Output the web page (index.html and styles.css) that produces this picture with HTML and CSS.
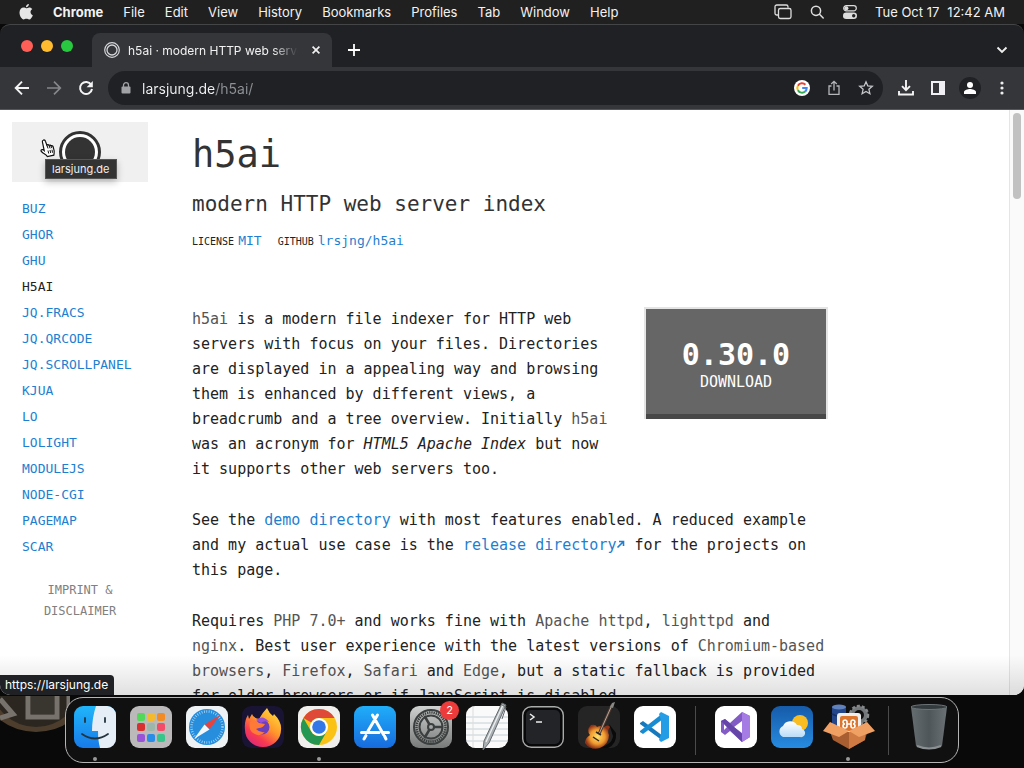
FILE: index.html
```html
<!DOCTYPE html>
<html lang="en">
<head>
  <meta charset="UTF-8">
  <title>h5ai · modern HTTP web server index</title>
  <link rel="stylesheet" href="styles.css">
</head>
<body>
  <header class="menubar">
    <svg class="apple" viewBox="0 0 16 18" width="16" height="18"><path fill="#e6e6e6" d="M10.9 1c.1 1.700-1.300 3.300-2.900 3.300C7.800 2.600 9.300 1.100 10.900 1zM8.300 5.200c.8 0 1.700-.8 3-.8 1.200 0 2.300.6 3 1.600-2.600 1.600-2.200 5.100.5 6.200-.6 1.900-2.100 4.300-3.600 4.300-1.100 0-1.500-.7-2.800-.7s-1.800.7-2.800.7C3.700 16.500 1.500 13 1.500 9.600c0-3.200 2-5.100 4.100-5.100 1.200 0 2 .7 2.700.7z"/></svg>
    <nav class="menus">
      <button class="app-name">Chrome</button>
      <button>File</button>
      <button>Edit</button>
      <button>View</button>
      <button>History</button>
      <button>Bookmarks</button>
      <button>Profiles</button>
      <button>Tab</button>
      <button>Window</button>
      <button>Help</button>
    </nav>
    <div class="status">
      <svg viewBox="0 0 18 16" width="18" height="16" fill="none" stroke="#ddd" stroke-width="1.300"><path d="M4 11H2.800A1.800 1.800 0 0 1 1 9.200v-6.400a1.800 1.800 0 0 1 1.800-1.800h9.400A1.800 1.800 0 0 1 14 2.800v1"/><rect x="4.500" y="4.500" width="12.500" height="10" rx="1.800"/></svg>
      <svg viewBox="0 0 16 16" width="16" height="16" fill="none" stroke="#ddd" stroke-width="1.500" stroke-linecap="round"><circle cx="7" cy="6.800" r="4.600"/><path d="M10.500 10.300l3.700 3.700"/></svg>
      <svg viewBox="0 0 16 16" width="16" height="16"><rect x="1.700" y="1.700" width="12.600" height="5.200" rx="2.600" fill="none" stroke="#ddd" stroke-width="1.200"/><circle cx="4.400" cy="4.300" r="2" fill="#ddd"/><rect x="1" y="8.500" width="14" height="6.500" rx="3.200" fill="#ddd"/><circle cx="11.700" cy="11.700" r="1.700" fill="#222"/></svg>
      <span class="clock"><span>Tue Oct 17</span><span>12:42 AM</span></span>
    </div>
  </header>

  <div class="window">
    <div class="tabstrip">
      <div class="lights">
        <button class="light red" aria-label="Close"></button>
        <button class="light yellow" aria-label="Minimize"></button>
        <button class="light green" aria-label="Zoom"></button>
      </div>
      <div class="tab">
        <svg viewBox="0 0 16 16" width="16" height="16" fill="none" stroke="#d6d7d9"><circle cx="8" cy="8" r="7.300" stroke-width="1.200"/><circle cx="8" cy="8" r="5" stroke-width="1.300"/></svg>
        <span class="tab-title">h5ai · modern HTTP web server</span>
        <button aria-label="Close tab"><svg viewBox="0 0 8 8" width="8" height="8" stroke="#f1f1f1" stroke-width="1.700"><path d="M.6.6l6.800 6.800M7.400.6L.6 7.400"/></svg></button>
      </div>
      <button class="new-tab" aria-label="New tab"><svg viewBox="0 0 12 12" width="12" height="12" stroke="#fff" stroke-width="1.800"><path d="M6 0v12M0 6h12"/></svg></button>
      <button class="tab-search" aria-label="Search tabs"><svg viewBox="0 0 12 8" width="12" height="8" fill="none" stroke="#eee" stroke-width="1.900"><path d="M1.500 1.500L6 6l4.500-4.500"/></svg></button>
    </div>

    <div class="toolbar">
      <div class="history">
        <button aria-label="Back"><svg viewBox="0 0 16 16" width="16" height="16" fill="none" stroke="#f4f4f4" stroke-width="1.900"><path d="M15 8H2M8 1.700L1.700 8 8 14.300"/></svg></button>
        <button aria-label="Forward"><svg viewBox="0 0 16 16" width="16" height="16" fill="none" stroke="#85878a" stroke-width="1.700"><path d="M1 8h13M8 1.700L14.300 8 8 14.300"/></svg></button>
        <button aria-label="Reload"><svg viewBox="0 0 16 16" width="16" height="16"><path d="M13.200 4.800A6 6 0 1 0 14 9" fill="none" stroke="#f4f4f4" stroke-width="2"/><path d="M14.800 1v6.200H8.600z" fill="#f4f4f4"/></svg></button>
      </div>
      <div class="address">
        <svg viewBox="0 0 10 12" width="10" height="12"><rect x=".5" y="4.500" width="9" height="7" rx="1" fill="#a0a2a5"/><path d="M2.500 5V3.200a2.500 2.500 0 0 1 5 0V5" fill="none" stroke="#a0a2a5" stroke-width="1.300"/></svg>
        <input type="text" class="url" value="larsjung.de/h5ai/" aria-label="Address">
        <div class="address-icons">
          <button aria-label="Google"><svg viewBox="0 0 16 16" width="16" height="16" fill="none" stroke-width="2"><circle cx="8" cy="8" r="8" fill="#fff"/><path stroke="#ea4335" d="M3.900 5.700A4.700 4.700 0 0 1 11.400 4.700"/><path stroke="#fbbc05" d="M3.900 5.700a4.700 4.700 0 0 0 0 4.600"/><path stroke="#34a853" d="M3.900 10.300a4.700 4.700 0 0 0 7.200 1.200"/><path stroke="#4285f4" d="M11.100 11.500A4.700 4.700 0 0 0 12.700 8.100H8.200"/></svg></button>
          <button aria-label="Share"><svg viewBox="0 0 16 16" width="16" height="16" fill="none" stroke="#b4b6b9" stroke-width="1.300"><path d="M5.500 6h-2.500v8.300h10V6h-2.500M8 10.500V1.500M5.200 4L8 1.300 10.800 4"/></svg></button>
          <button aria-label="Bookmark"><svg viewBox="0 0 16 16" width="16" height="16" fill="none" stroke="#c5c7ca" stroke-width="1.300"><path d="M8 1.800l1.800 4.100 4.500.4-3.400 3 1 4.400L8 11.400l-3.900 2.300 1-4.400-3.400-3 4.500-.4z"/></svg></button>
        </div>
      </div>
      <div class="actions">
        <button aria-label="Downloads"><svg viewBox="0 0 16 16" width="16" height="16" fill="none" stroke="#f4f4f4" stroke-width="1.900"><path d="M8 0v10M4 6.200l4 4 4-4M1 11v3.500h14V11"/></svg></button>
        <button aria-label="Side panel"><svg viewBox="0 0 16 16" width="16" height="16"><path fill="#f0f0f4" fill-rule="evenodd" d="M1 1h14v14H1zM3 3v10h6V3z"/></svg></button>
        <button class="profile" aria-label="Profile"><svg viewBox="0 0 16 16" width="16" height="16" fill="#fff"><circle cx="8" cy="5" r="3"/><path d="M2 14v-2c0-2 4-3 6-3s6 1 6 3v2z"/></svg></button>
        <button aria-label="More"><svg viewBox="0 0 16 16" width="16" height="16" fill="#eee"><circle cx="8" cy="3" r="1.600"/><circle cx="8" cy="8" r="1.600"/><circle cx="8" cy="13" r="1.600"/></svg></button>
      </div>
    </div>

    <div class="viewport">
      <aside class="sidebar">
        <a href="#" class="logo" aria-label="larsjung.de">
          <svg viewBox="0 0 42 42" width="42" height="42"><circle cx="21" cy="21" r="19.500" fill="#fff" stroke="#333" stroke-width="3"/><circle cx="21" cy="21" r="15" fill="#333"/></svg>
        </a>
        <nav class="projects">
          <a href="#">BUZ</a>
          <a href="#">GHOR</a>
          <a href="#">GHU</a>
          <a href="#" class="active">H5AI</a>
          <a href="#">JQ.FRACS</a>
          <a href="#">JQ.QRCODE</a>
          <a href="#">JQ.SCROLLPANEL</a>
          <a href="#">KJUA</a>
          <a href="#">LO</a>
          <a href="#">LOLIGHT</a>
          <a href="#">MODULEJS</a>
          <a href="#">NODE-CGI</a>
          <a href="#">PAGEMAP</a>
          <a href="#">SCAR</a>
        </nav>
        <a href="#" class="imprint">IMPRINT &amp;<br>DISCLAIMER</a>
      </aside>

      <main class="content">
        <h1>h5ai</h1>
        <h2>modern HTTP web server index</h2>
        <div class="infos">
          <span>LICENSE <a href="#">MIT</a></span>
          <span>GITHUB <a href="#">lrsjng/h5ai</a></span>
        </div>
        <a href="#" class="download">
          <strong>0.30.0</strong>
          <span>DOWNLOAD</span>
        </a>
        <p><b>h5ai</b> is a modern file indexer for HTTP web servers with focus on your files. Directories are displayed in a appealing way and browsing them is enhanced by different views, a breadcrumb and a tree overview. Initially <b>h5ai</b> was an acronym for <em>HTML5 Apache Index</em> but now it supports other web servers too.</p>
        <p>See the <a href="#">demo directory</a> with most features enabled. A reduced example and my actual use case is the <a href="#">release directory<svg class="external" viewBox="0 0 9 9" width="9" height="9"><path d="M1.500 7.500L7 2M3 1.500h4.500V6" fill="none" stroke="#1e7fd0" stroke-width="1.600"/></svg></a> for the projects on this page.</p>
        <p>Requires <b>PHP 7.0+</b> and works fine with <b>Apache httpd</b>, <b>lighttpd</b> and <b>nginx</b>. Best user experience with the latest versions of <b>Chromium-based browsers</b>, <b>Firefox</b>, <b>Safari</b> and <b>Edge</b>, but a static fallback is provided for older browsers or if JavaScript is disabled.</p>
      </main>

      <div class="scrollbar"><div class="thumb"></div></div>
      <div class="tooltip">larsjung.de</div>
      <svg class="pointer" viewBox="0 0 16 18" width="16" height="18"><path d="M3.200 1.200c1-.6 1.900.1 2.200 1l1.500 4c.5-.7 1.600-.7 2.100.2.700-.5 1.600-.3 2 .5 1-.5 1.900.1 2.200 1 .7 2.200 1.400 4.400.9 6.800l-.3 1.500-6.500 1.300c-.9-1.700-2.800-2.500-4.300-3.600-1.600-1-2.500-2-1.800-2.900.8-.9 2.100-.2 3 .6L2.400 3c-.2-.8.1-1.500.8-1.800z" fill="#fff" stroke="#111" stroke-width="1.200"/><path d="M7 6.300l1 3.200M9.200 6.800l.9 2.600M11.200 7.200l.7 2M8 11.500l.7 3M10 11l.7 3M12 10.700l.5 3" fill="none" stroke="#111"/></svg>
      <div class="link-status">https://larsjung.de</div>
    </div>
  </div>

  <footer class="desktop">
    <svg class="wallpaper" viewBox="0 0 70 42" width="70" height="42"><ellipse cx="36" cy="-2" rx="49" ry="38" fill="#4d3d2d"/><ellipse cx="36" cy="-8" rx="43" ry="39" fill="#2b2620"/><path d="M0 22L13 18 0 3M28 0v21h29V0M69 0v12" fill="none" stroke="#77726b" stroke-width="5"/><path d="M31 0v18h23V0" fill="#393630"/></svg>
    <nav class="dock">
      <button class="app running" aria-label="Finder">
        <svg viewBox="0 0 42 42"><defs><linearGradient id="finder" x2="0" y2="1"><stop stop-color="#20b5fa"/><stop offset="1" stop-color="#187be9"/></linearGradient></defs><rect width="42" height="42" rx="9" fill="url(#finder)"/><path d="M22 0h11a9 9 0 0 1 9 9v24a9 9 0 0 1-9 9h-7q-2-7-2-17h-6Q18 12 22 0z" fill="#e5edf6"/><path d="M11 12v4M31 12v4M8 28q13 9 26 0" fill="none" stroke="#23343f" stroke-width="1.800" stroke-linecap="round"/></svg>
      </button>
      <button class="app" aria-label="Launchpad">
        <svg viewBox="0 0 42 42"><rect width="42" height="42" rx="9" fill="#bcb9bb"/><rect x="7" y="7" width="8" height="8" rx="2" fill="#53d85a"/><rect x="17" y="7" width="8" height="8" rx="2" fill="#f5ba2b"/><rect x="27" y="7" width="8" height="8" rx="2" fill="#f28b24"/><rect x="7" y="17" width="8" height="8" rx="2" fill="#d82f30"/><rect x="17" y="17" width="8" height="8" rx="2" fill="#9db6ac"/><rect x="27" y="17" width="8" height="8" rx="2" fill="#f34c68"/><rect x="7" y="28" width="8" height="8" rx="2" fill="#9953d6"/><rect x="17" y="28" width="8" height="8" rx="2" fill="#278de7"/><rect x="27" y="28" width="8" height="8" rx="2" fill="#38c58c"/></svg>
      </button>
      <button class="app" aria-label="Safari">
        <svg viewBox="0 0 42 42"><rect width="42" height="42" rx="9" fill="#eef2f5"/><circle cx="21" cy="21" r="18" fill="#278edd"/><circle cx="21" cy="21" r="15.500" fill="none" stroke="#b9ddf5" stroke-width="2.500" stroke-dasharray=".7 1.700"/><path d="M34 9L18.500 18.500l5 5z" fill="#e7433e"/><path d="M8 33l10.500-14.500 5 5z" fill="#f4f7fa"/></svg>
      </button>
      <button class="app" aria-label="Firefox">
        <svg viewBox="0 0 42 42"><defs><linearGradient id="fox" x1=".9" y1="0" x2=".2" y2="1"><stop stop-color="#ffe43c"/><stop offset=".45" stop-color="#ff982b"/><stop offset=".75" stop-color="#f83a51"/><stop offset="1" stop-color="#db257e"/></linearGradient></defs><rect width="42" height="42" rx="9" fill="#191334"/><path d="M25 2q2 5 6 8l1-2q8 8 7 16A18 17 0 0 1 3 24Q2 15 6 9l1 4 3-5q1 4 7 5 4-7 8-11z" fill="url(#fox)"/><circle cx="20" cy="21" r="7.500" fill="#6c40bc"/><path d="M8 16q5-4 9 1l6 1q-2 4-6 4l-3 1q4 4 9 3-5 5-10 2-7-3-5-12z" fill="#ff7937"/><path d="M14 14q7-6 13 2-5-2-8 1z" fill="#9851d5"/></svg>
      </button>
      <button class="app running" aria-label="Chrome">
        <svg viewBox="0 0 42 42"><rect width="42" height="42" rx="9" fill="#f1efed"/><circle cx="21" cy="21" r="18" fill="#fbc216"/><path d="M5.400 12A18 18 0 0 1 36.600 12H21a9 9 0 0 0-7.800 4.500z" fill="#df4937"/><path d="M5.400 12A18 18 0 0 0 21 39l7.800-13.500A9 9 0 0 1 13.200 25.500z" fill="#269653"/><circle cx="21" cy="21" r="9" fill="#fff"/><circle cx="21" cy="21" r="6.800" fill="#3478e7"/></svg>
      </button>
      <button class="app" aria-label="App Store">
        <svg viewBox="0 0 42 42"><defs><linearGradient id="store" x2="0" y2="1"><stop stop-color="#20aefa"/><stop offset="1" stop-color="#176bdd"/></linearGradient></defs><rect width="42" height="42" rx="9" fill="url(#store)"/><path d="M18.500 9L29.500 28.500M23.500 9L14 25M7.500 26.500H25M30 26.500h4.500M12 29.500l-2 3.500M30.500 30l1.500 3" stroke="#fff" stroke-width="3" stroke-linecap="round"/></svg>
      </button>
      <button class="app" aria-label="System Settings">
        <svg viewBox="0 0 42 42"><defs><linearGradient id="steel" x2="0" y2="1"><stop stop-color="#d0d2d1"/><stop offset="1" stop-color="#777a79"/></linearGradient></defs><rect width="42" height="42" rx="9" fill="url(#steel)"/><g fill="none" stroke="#3c3f3f"><circle cx="21" cy="21" r="17" stroke-width="2"/><circle cx="21" cy="21" r="14.500" stroke-width="2.500" stroke-dasharray="1.400 .8"/><circle cx="21" cy="21" r="11.500" stroke-width="2"/><circle cx="21" cy="21" r="3" stroke-width="2"/><path d="M24 21H33M19.500 18.500l-5-8.500M19.500 23.500l-5 8.500" stroke-width="2.500"/></g></svg>
        <span class="badge">2</span>
      </button>
      <button class="app" aria-label="TextEdit">
        <svg viewBox="0 0 42 42"><rect width="42" height="42" rx="9" fill="#fafafa"/><path d="M0 11h42M0 17h42M0 23h42M0 29h42M0 35h42" stroke="#b9c4ca" stroke-width=".8"/><path d="M7 0v42" stroke="#dcdcdc"/><path d="M36-3l4 2-17 38-6 7 1-9z" fill="#aab0b3" stroke="#63696c"/><path d="M37-1L20 36" stroke="#eef1f2" stroke-width="1.300"/><path d="M36-1l4 2-4 12" fill="none" stroke="#64696c"/></svg>
      </button>
      <button class="app" aria-label="Terminal">
        <svg viewBox="0 0 42 42"><rect x=".7" y=".7" width="40.600" height="40.600" rx="8.500" fill="#080808" stroke="#a9aaaa" stroke-width="1.400"/><rect x="4" y="4" width="34" height="34" rx="5" fill="#222427"/><path d="M8 8l4 3-4 3M14 16h6" fill="none" stroke="#eee" stroke-width="1.500"/></svg>
      </button>
      <button class="app" aria-label="GarageBand">
        <svg viewBox="0 0 42 42"><defs><radialGradient id="burst"><stop stop-color="#ffe06a"/><stop offset=".6" stop-color="#f09a30"/><stop offset="1" stop-color="#8f3318"/></radialGradient></defs><rect width="42" height="42" rx="9" fill="#252526"/><path d="M17 42q17-2 18-12l-4-12 7 9q1 11-8 15z" fill="#0a0a0a"/><path d="M13 19q5-1 6 2 3-2 7 0 4-3 6 0-3 3-1 8 0 9-9 13-9 3-15-5 0-5 5-8-4-5 1-10z" fill="url(#burst)"/><path d="M21 28L34-1" stroke="#503a31" stroke-width="3"/><path d="M21 28L34-1" stroke="#b5a798"/><path d="M32 1l2-4 3-1-2 6" fill="#8b8985"/><path d="M15 31l6 4M18 26l5 3" stroke="#312821" stroke-width="1.500"/></svg>
      </button>
      <button class="app" aria-label="Visual Studio Code">
        <svg viewBox="0 0 42 42"><rect width="42" height="42" rx="9" fill="#fff"/><path d="M6 17l3-2 20 15v5L6 18z" fill="#1779bd"/><path d="M6 26l3 2 20-15V7L6 25z" fill="#198bd1"/><path d="M27 6l8 4v22l-8 4-2-2 2-6V14l-2-6z" fill="#249de6"/></svg>
      </button>
      <span class="divider"></span>
      <button class="app" aria-label="Visual Studio">
        <svg viewBox="0 0 42 42"><rect width="42" height="42" rx="9" fill="#fff"/><path fill-rule="evenodd" d="M6 15l4-2 5 4L27 6l8 4v21l-8 5-12-11-5 4-4-3zM9 18v6l3-3zM27 15l-8 6 8 6z" fill="#825bc5"/><path d="M27 6l8 4v21l-8 5z" fill="#a47ce3"/><path d="M6 15l4-2 17 15v8L9 18z" fill="#6545a8"/></svg>
      </button>
      <button class="app" aria-label="Weather">
        <svg viewBox="0 0 42 42"><defs><linearGradient id="sky" x2="0" y2="1"><stop stop-color="#165ba9"/><stop offset="1" stop-color="#278be0"/></linearGradient><linearGradient id="cloud" x2="0" y2="1"><stop stop-color="#fff"/><stop offset="1" stop-color="#b9dcf7"/></linearGradient></defs><rect width="42" height="42" rx="9" fill="url(#sky)"/><circle cx="29" cy="17" r="8" fill="#f9bd22"/><path d="M12 31a6 6 0 0 1 0-11 8 8 0 0 1 14-1q5 0 5 4a4 4 0 0 1-2 8z" fill="url(#cloud)"/></svg>
      </button>
      <button class="app running" aria-label="XAMPP">
        <svg viewBox="0 0 42 42"><circle cx="32" cy="9" r="7" fill="none" stroke="#74777a" stroke-width="4"/><circle cx="32" cy="9" r="9" fill="none" stroke="#85898b" stroke-width="2.500" stroke-dasharray="3 2"/><path d="M5 1v18h14V1z" fill="#244588"/><ellipse cx="12" cy="1" rx="7" ry="2.500" fill="#5f82bf"/><path d="M5 8q7 4 14 0" fill="none" stroke="#172f62" stroke-width="2"/><rect x="10" y="7" width="24" height="19" rx="3" fill="#eee"/><rect x="13" y="10" width="18" height="15" rx="2" fill="#dc752e"/><path d="M20 18h4M20 18v-1.500a2 2 0 1 0-2 1.500 2 2 0 1 0 2 2zM24 18v-1.500a2 2 0 1 1 2 1.500 2 2 0 1 1-2 2z" fill="none" stroke="#fff" stroke-width="1.600"/><path d="M2 23l20 3 19-3-3 11-16 9-16-9z" fill="#a95e32"/><path d="M22 26v17l16-9V23z" fill="#cf7a43"/><path d="M3 16l-7 9 16 6 10-6zM40 16l8 9-16 6-10-6z" fill="#f1a064"/></svg>
      </button>
      <span class="divider"></span>
      <button class="app" aria-label="Trash">
        <svg viewBox="0 0 42 42"><defs><linearGradient id="bin"><stop stop-color="#666d71"/><stop offset=".5" stop-color="#4f565a"/><stop offset="1" stop-color="#6b7174"/></linearGradient></defs><path d="M3 1h36l-5 39q-13 6-26 0z" fill="url(#bin)"/><ellipse cx="21" cy="1" rx="18" ry="2.500" fill="#343b3e" stroke="#6d7579"/><path d="M9 40q12 5 24 0" fill="none" stroke="#8b9193" stroke-width="2"/></svg>
      </button>
    </nav>
  </footer>
</body>
</html>
```
FILE: styles.css
```css
* {
  box-sizing: border-box;
}

html, body {
  margin: 0;
  height: 100%;
}

body {
  display: flex;
  flex-direction: column;
  overflow: hidden;
  background: #090909;
  color: #f2f2f2;
  font-family: Inter, "Liberation Sans", sans-serif;
  font-size: 13px;
}

a {
  color: #1e7fd0;
  text-decoration: none;
}

button {
  display: flex;
  align-items: center;
  justify-content: center;
  padding: 0;
  border: 0;
  background: none;
  color: inherit;
  font: inherit;
}

svg {
  display: block;
  flex: none;
  overflow: visible;
}

/* system menu bar */
.menubar {
  display: flex;
  align-items: center;
  height: 24px;
  padding: 0 19px 0 18px;
  background: #202020;
}

.menus {
  display: flex;
  gap: 20px;
  margin-left: 19px;
}

.app-name {
  font-weight: 700;
}

.status {
  display: flex;
  align-items: center;
  gap: 17px;
  margin-left: auto;
}

.clock {
  display: flex;
  gap: 8px;
}

/* browser window */
.window {
  display: flex;
  flex: 1;
  flex-direction: column;
  min-height: 0;
  overflow: hidden;
  border-top: 1px solid #444547;
  border-radius: 10px;
  background: #202124;
}

.tabstrip {
  display: flex;
  align-items: flex-end;
  height: 42px;
  padding-right: 16px;
}

.lights {
  display: flex;
  gap: 8px;
  width: 92px;
  padding-left: 21px;
  margin-bottom: 15px;
}

.light {
  width: 12px;
  height: 12px;
  border-radius: 50%;
}

.red {
  background: #ff5f57;
}

.yellow {
  background: #febc2e;
}

.green {
  background: #28c840;
}

.tab {
  display: flex;
  align-items: center;
  gap: 8px;
  width: 240px;
  height: 34px;
  padding: 0 12px;
  border-radius: 8px 8px 0 0;
  background: #35363a;
  font-size: 12px;
}

.tab-title {
  flex: 1;
  overflow: hidden;
  margin-right: 6px;
  white-space: nowrap;
  mask-image: linear-gradient(to right, #000 85%, transparent);
}

.new-tab {
  height: 34px;
  margin-left: 16px;
}

.tab-search {
  height: 34px;
  margin-left: auto;
}

.toolbar {
  display: flex;
  align-items: center;
  height: 43px;
  padding: 0 14px;
  border-bottom: 1px solid #55565a;
  background: #35363a;
}

.history,
.actions,
.address-icons {
  display: flex;
  align-items: center;
  gap: 16px;
}

.address {
  display: flex;
  flex: 1;
  align-items: center;
  height: 34px;
  margin: 0 15px 0 14px;
  padding: 0 9px 0 13px;
  border-radius: 17px;
  background: #202124;
}

.url {
  flex: 1;
  min-width: 0;
  margin-left: 11px;
  padding: 0;
  border: 0;
  outline: 0;
  background: linear-gradient(to right, #f1f3f4 74px, #8e9297 74px);
  background-clip: text;
  -webkit-text-fill-color: transparent;
  color: #f1f3f4;
  font: 14px Inter, sans-serif;
}

.profile {
  width: 22px;
  height: 22px;
  margin: 0 -3px;
  border-radius: 50%;
  background: #202124;
}

/* page */
.viewport {
  position: relative;
  display: flex;
  flex: 1;
  min-height: 0;
  overflow: hidden;
  background: #fff;
  color: #222;
  font-family: "DejaVu Sans Mono", monospace;
  font-size: 15px;
  line-height: 25px;
}

.viewport::after {
  position: absolute;
  right: 0;
  bottom: 0;
  left: 0;
  height: 40px;
  background: linear-gradient(rgba(0, 0, 0, 0), rgba(0, 0, 0, .12));
  content: "";
}

.sidebar {
  display: flex;
  flex: none;
  flex-direction: column;
  width: 136px;
  margin: 12px 44px 0 12px;
}

.logo {
  display: flex;
  align-items: center;
  justify-content: center;
  height: 60px;
  background: #f0f0f0;
}

.projects {
  display: flex;
  flex-direction: column;
  margin: 14px 0 20px;
  padding-left: 10px;
  font-size: 13px;
  line-height: 26px;
}

.projects .active {
  color: #222;
}

.imprint {
  color: #808080;
  font-size: 12px;
  line-height: 21px;
  text-align: center;
}

.content {
  width: 636px;
}

h1, h2 {
  margin: 0;
  color: #333;
  font-weight: 400;
}

h1 {
  margin-top: 20px;
  font-size: 37px;
  line-height: 50px;
}

h2 {
  margin-top: 9px;
  font-size: 21px;
  line-height: 30px;
}

.infos {
  display: flex;
  gap: 16px;
  margin: 9px 0 53px;
  font-size: 10px;
}

.infos span {
  display: flex;
  align-items: baseline;
  gap: 4px;
}

.infos a {
  font-size: 13px;
}

.download {
  display: flex;
  float: right;
  flex-direction: column;
  align-items: center;
  width: 184px;
  height: 112px;
  margin: 0 0 24px 30px;
  padding-top: 28px;
  border: 2px solid #e4e4e4;
  border-bottom: 0;
  background: #666;
  box-shadow: inset 0 -5px #484848;
  color: #fff;
}

.download strong {
  font-size: 30px;
  line-height: 36px;
}

.download span {
  line-height: 18px;
}

p {
  margin: 1px 0 26px;
}

p b {
  color: #555;
  font-weight: 400;
}

.external {
  display: inline-block;
  vertical-align: 1px;
}

.scrollbar {
  width: 15px;
  margin-left: auto;
  padding: 3px;
  border-left: 1px solid #e5e5e5;
  background: #fafafa;
}

.thumb {
  width: 8px;
  height: 86px;
  border-radius: 4px;
  background: #c1c1c1;
}

.tooltip {
  position: absolute;
  top: 49px;
  left: 45px;
  padding: 0 6px;
  border: 1px solid #555;
  background: #333;
  box-shadow: 0 3px 7px rgba(0, 0, 0, .25);
  color: #eee;
  font: 11px/18px Inter, sans-serif;
}

.pointer {
  position: absolute;
  top: 29px;
  left: 40px;
}

.link-status {
  position: absolute;
  bottom: 0;
  left: 0;
  z-index: 1;
  padding: 0 6px 0 5px;
  border-radius: 0 4px 0 0;
  background: #202124;
  color: #fff;
  font: 12px/20px Inter, sans-serif;
}

/* dock */
.desktop {
  position: relative;
  display: flex;
  justify-content: center;
  height: 73px;
  padding-top: 2px;
}

.wallpaper {
  position: absolute;
  top: 1px;
  left: 0;
  overflow: hidden;
}

.dock {
  position: relative;
  display: flex;
  gap: 14px;
  height: 66px;
  padding: 8px;
  border: 1px solid #b5b5b5;
  border-radius: 18px;
  background: #101010;
}

.app {
  position: relative;
  width: 42px;
  height: 42px;
}

.app svg {
  width: 42px;
  height: 42px;
}

.running::after {
  position: absolute;
  bottom: -13px;
  left: 19px;
  width: 4px;
  height: 4px;
  border-radius: 50%;
  background: #999;
  content: "";
}

.badge {
  position: absolute;
  top: -5px;
  right: -7px;
  width: 19px;
  border-radius: 10px;
  background: #ed3b3b;
  color: #fff;
  font-size: 11px;
  line-height: 19px;
}

.divider {
  width: 1px;
  height: 49px;
  margin: 0 5px;
  background: #4b4b4b;
}
```
